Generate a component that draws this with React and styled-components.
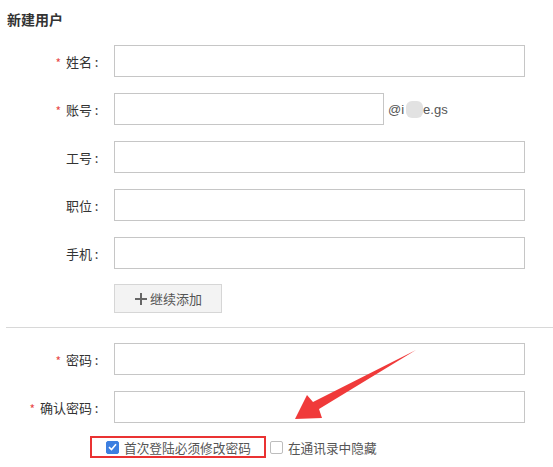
import React from 'react';
import styled, { createGlobalStyle } from 'styled-components';

const GlobalStyle = createGlobalStyle`
  html, body {
    margin: 0;
    padding: 0;
    background: #ffffff;
  }
  body {
    font-family: "Noto Sans CJK SC", "Liberation Sans", sans-serif;
    color: #333;
  }
`;

const Page = styled.div`
  position: relative;
  width: 553px;
  height: 467px;
  overflow: hidden;
  padding-left: 6px;
  box-sizing: border-box;
`;

const Title = styled.div`
  font-size: 14px;
  font-weight: 700;
  color: #333;
  line-height: 20px;
  padding-top: 9px;
  margin-bottom: 16px;
  margin-left: 1px;
`;

const Row = styled.div`
  display: flex;
  align-items: center;
  margin-bottom: 16px;
`;

const Label = styled.div`
  width: 95px;
  margin-right: 13px;
  display: flex;
  justify-content: flex-end;
  align-items: center;
  font-size: 13px;
  color: #333;
  white-space: nowrap;
`;

const Star = styled.span`
  color: #e84a4a;
  font-size: 12px;
  margin-right: 5px;
  padding-top: 2px;
`;

const Colon = styled.span`
  display: inline-block;
  width: 9px;
  text-align: center;
`;

const Input = styled.div`
  width: ${({ $w }) => $w || 411}px;
  height: 32px;
  box-sizing: border-box;
  border: 1px solid #c6c6c6;
  background: #fff;
`;

const Suffix = styled.div`
  margin-left: 4px;
  font-family: "Liberation Sans", "Open Sans", sans-serif;
  font-size: 13px;
  color: #555;
  display: flex;
  align-items: center;
`;

const Blur = styled.span`
  display: inline-block;
  width: 17px;
  height: 17px;
  margin: 0 0 0 2px;
  background: #e2e2e2;
  border-radius: 6px;
`;

const AddButton = styled.div`
  margin: -1px 0 0 108px;
  width: 108px;
  height: 29px;
  box-sizing: border-box;
  border: 1px solid #d6d6d6;
  background: #f3f3f3;
  display: flex;
  align-items: center;
  justify-content: center;
  font-size: 13px;
  color: #555;
  gap: 2px;
`;

const Divider = styled.div`
  height: 1px;
  background: #d8d8d8;
  margin: 14px 0 15px 0;
`;

const CheckRow = styled.div`
  display: flex;
  align-items: center;
  margin-left: 84px;
  margin-top: -3px;
`;

const CheckLabel = styled.label`
  display: flex;
  align-items: center;
  height: 22px;
  box-sizing: border-box;
  font-size: 12.7px;
  color: #555;
  padding: ${({ $marked }) => ($marked ? '0 13px 0 14px' : '0 0 0 4px')};
  border: ${({ $marked }) => ($marked ? '2px solid #ea3232' : 'none')};
`;

const Box = styled.span`
  width: 13px;
  height: 13px;
  box-sizing: border-box;
  border-radius: 2px;
  margin-right: 5px;
  display: flex;
  align-items: center;
  justify-content: center;
  background: ${({ $on }) => ($on ? '#3d7fe0' : '#fff')};
  border: 1px solid ${({ $on }) => ($on ? '#3d7fe0' : '#bdbdbd')};
`;

const Arrow = styled.svg`
  position: absolute;
  left: 0;
  top: 0;
  pointer-events: none;
`;

const Field = ({ label, required, width, children }) => (
  <Row>
    <Label>
      {required && <Star>*</Star>}
      {label}
      <Colon>:</Colon>
    </Label>
    <Input $w={width} />
    {children}
  </Row>
);

const Check = ({ on, marked, children }) => (
  <CheckLabel $marked={marked}>
    <Box $on={on}>
      {on && (
        <svg width="9" height="8" viewBox="0 0 9 8">
          <path d="M1 4.2 L3.5 6.5 L8 1.3" fill="none" stroke="#fff" strokeWidth="1.6" />
        </svg>
      )}
    </Box>
    {children}
  </CheckLabel>
);

export default function App() {
  return (
    <>
      <GlobalStyle />
      <Page>
        <Title>新建用户</Title>
        <Field label="姓名" required />
        <Field label="账号" required width={270}>
          <Suffix>
            @i<Blur />e.gs
          </Suffix>
        </Field>
        <Field label="工号" />
        <Field label="职位" />
        <Field label="手机" />
        <AddButton>
          <svg width="14" height="14" viewBox="0 0 14 14">
            <path d="M7 1 V13 M1 7 H13" stroke="#666" strokeWidth="2" />
          </svg>
          继续添加
        </AddButton>
        <Divider />
        <Field label="密码" required />
        <Field label="确认密码" required />
        <CheckRow>
          <Check on marked>首次登陆必须修改密码</Check>
          <Check>在通讯录中隐藏</Check>
        </CheckRow>
        <Arrow width="553" height="467" viewBox="0 0 553 467">
          <polygon
            points="416,350 319,409 322,418 295,419 307,395 313,402"
            fill="#f03a3a"
          />
        </Arrow>
      </Page>
    </>
  );
}
